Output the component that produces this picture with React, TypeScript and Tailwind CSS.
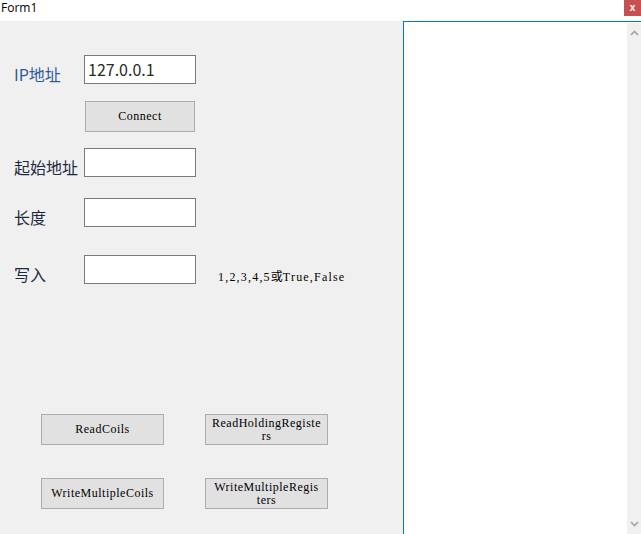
import React from "react";

const cjk = "font-['Microsoft_YaHei','Noto_Sans_CJK_SC',sans-serif]";
const song = "font-['SimSun','Liberation_Serif','Noto_Serif_CJK_SC','Noto_Sans_CJK_SC',serif]";

const Field = ({ label, value, labelClass = "text-[#1d2a3e]" }: { label: string; value?: string; labelClass?: string }) => (
  <div className="flex items-start">
    <span className={`w-[84px] h-[29px] shrink-0 flex items-end pl-[14px] text-[16px] leading-[20px] whitespace-nowrap ${cjk} ${labelClass}`}>
      {label}
    </span>
    <div className={`w-[112px] h-[29px] shrink-0 bg-white border border-[#7a7a7a] pl-[3px] text-[16px] leading-[26px] text-[#2a2a2a] ${cjk}`}>
      {value}
    </div>
  </div>
);

const WinButton = ({ lines, className = "" }: { lines: string[]; className?: string }) => (
  <button
    className={`flex flex-col items-center justify-center h-[31px] bg-[#e1e1e1] border border-[#adadad] text-[12px] leading-[13px] tracking-[0.5px] text-black ${song} ${className}`}
  >
    {lines.map((l) => (
      <span key={l}>{l}</span>
    ))}
  </button>
);

export default function App() {
  return (
    <div className="w-[641px] h-[534px] overflow-hidden flex flex-col bg-white">
      {/* title bar */}
      <div className="h-[21px] flex items-start justify-between bg-white">
        <span className="pl-[1px] pt-[1px] text-[12px] leading-[14px] text-black font-['Open_Sans','Noto_Sans',sans-serif]">Form1</span>
        <div className="w-[17px] h-[16px] bg-[#c75050] flex items-center justify-center text-white text-[10px] font-bold leading-none font-['Liberation_Sans',sans-serif]">
          x
        </div>
      </div>

      <div className="flex flex-1 min-h-0">
        {/* controls */}
        <div className="w-[403px] shrink-0 bg-[#f0f0f0] flex flex-col pt-[34px]">
          <Field label="IP地址" value="127.0.0.1" labelClass="text-[#2d5c94]" />
          <div className="pl-[85px] mt-[17px]">
            <WinButton lines={["Connect"]} className="w-[110px]" />
          </div>
          <div className="mt-[16px]">
            <Field label="起始地址" />
          </div>
          <div className="mt-[21px]">
            <Field label="长度" />
          </div>
          <div className="mt-[28px] flex items-start">
            <Field label="写入" />
            <span className={`ml-[22px] mt-[14px] text-[12px] tracking-[1.2px] leading-[14px] text-black ${song}`}>
              1,2,3,4,5<span className={`tracking-normal ${cjk}`}>或</span>True,False
            </span>
          </div>

          <div className="mt-[130px] flex gap-[41px] pl-[41px]">
            <WinButton lines={["ReadCoils"]} className="w-[123px]" />
            <WinButton lines={["ReadHoldingRegiste", "rs"]} className="w-[123px]" />
          </div>
          <div className="mt-[33px] flex gap-[41px] pl-[41px]">
            <WinButton lines={["WriteMultipleCoils"]} className="w-[123px]" />
            <WinButton lines={["WriteMultipleRegis", "ters"]} className="w-[123px]" />
          </div>
        </div>

        {/* output textbox with scrollbar */}
        <div className="flex-1 flex bg-white border-l border-t border-[#0078d7]">
          <div className="flex-1" />
          <div className="w-[14px] mt-[1px] bg-[#f0f0f0] flex flex-col items-center justify-between py-[7px]">
            <svg width="9" height="6" viewBox="0 0 9 6">
              <path d="M1 5 L4.5 1.5 L8 5" stroke="#a3a3a3" strokeWidth="1.6" fill="none" />
            </svg>
            <svg width="9" height="6" viewBox="0 0 9 6">
              <path d="M1 1 L4.5 4.5 L8 1" stroke="#a3a3a3" strokeWidth="1.6" fill="none" />
            </svg>
          </div>
        </div>
      </div>
    </div>
  );
}
